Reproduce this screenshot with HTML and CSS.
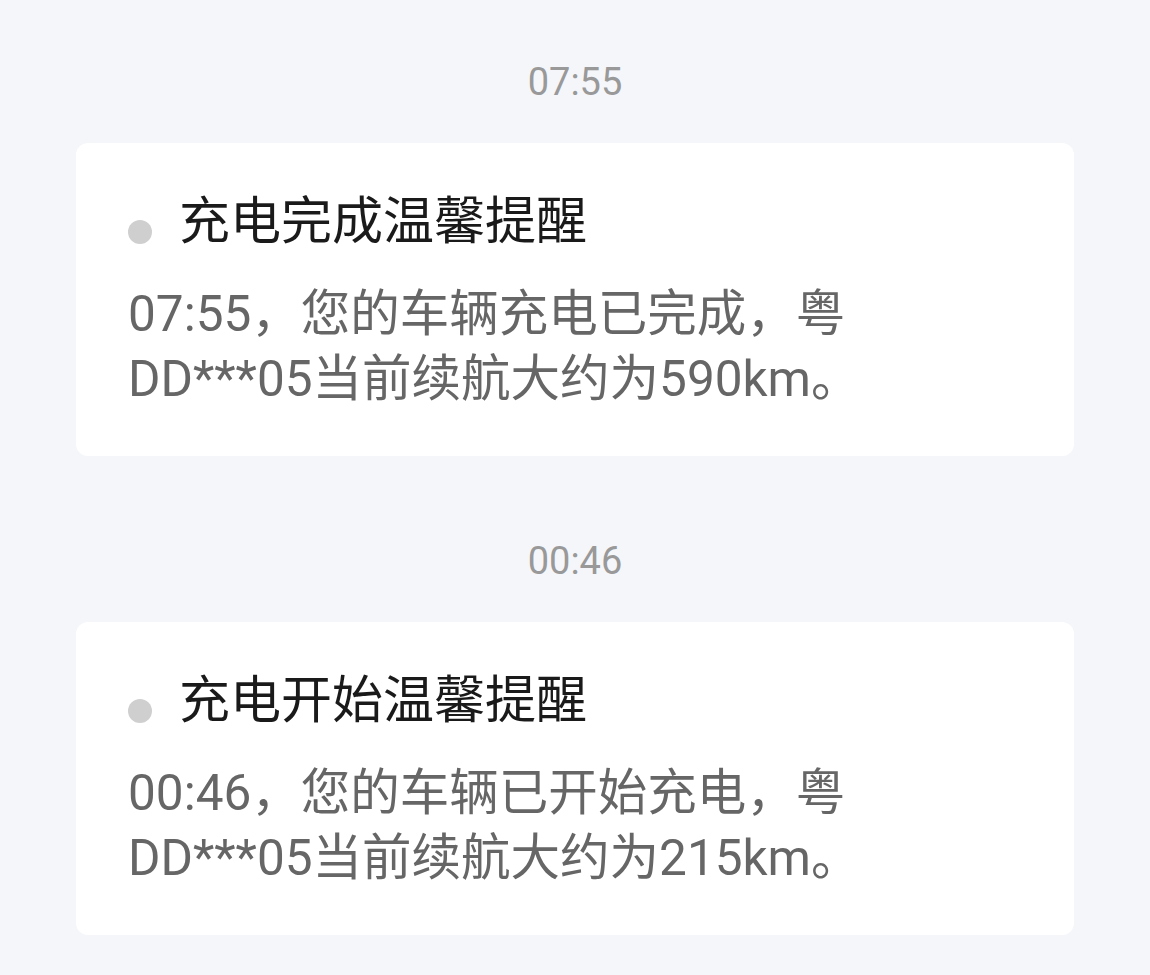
FILE: index.html
```html
<!DOCTYPE html>
<html lang="zh-CN">
<head>
    <meta charset="UTF-8">
    <meta name="viewport" content="width=device-width, initial-scale=1.0">
    <title>消息通知</title>
    <link rel="stylesheet" href="styles.css">
</head>
<body>
    <main class="feed">
        <!-- 充电完成 -->
        <section class="msg">
            <div class="msg-time">07:55</div>
            <div class="card">
                <div class="card-head">
                    <span class="dot"></span>
                    <h2 class="card-title">充电完成温馨提醒</h2>
                </div>
                <p class="card-text">07:55，您的车辆充电已完成，粤DD***05当前续航大约为590km。</p>
            </div>
        </section>

        <!-- 充电开始 -->
        <section class="msg">
            <div class="msg-time">00:46</div>
            <div class="card">
                <div class="card-head">
                    <span class="dot"></span>
                    <h2 class="card-title">充电开始温馨提醒</h2>
                </div>
                <p class="card-text">00:46，您的车辆已开始充电，粤DD***05当前续航大约为215km。</p>
            </div>
        </section>
    </main>
</body>
</html>
```

FILE: styles.css
```css
body {
    font-family: Roboto, "Noto Sans CJK SC", sans-serif;
    background-color: #f5f6fa;
    margin: 0;
    padding: 0;
}
.feed {
    padding: 57px 76px 0;
    display: flex;
    flex-direction: column;
    gap: 80px;
}
.msg-time {
    text-align: center;
    font-size: 38px;
    line-height: 50px;
    color: #999;
}
.card {
    margin-top: 36px;
    background-color: #fff;
    border-radius: 12px;
    padding: 44px 52px 44px;
}
.card-head {
    display: flex;
    align-items: flex-start;
    gap: 27px;
}
.dot {
    width: 24px;
    height: 24px;
    margin-top: 33px;
    border-radius: 50%;
    background-color: #cfcfcf;
    flex-shrink: 0;
}
.card-title {
    margin: 0;
    font-size: 51px;
    line-height: 70px;
    font-weight: 400;
    color: #1a1a1a;
}
.card-text {
    margin: 25px 0 0;
    max-width: 800px;
    font-size: 49.5px;
    line-height: 65px;
    color: #666;
}
```
